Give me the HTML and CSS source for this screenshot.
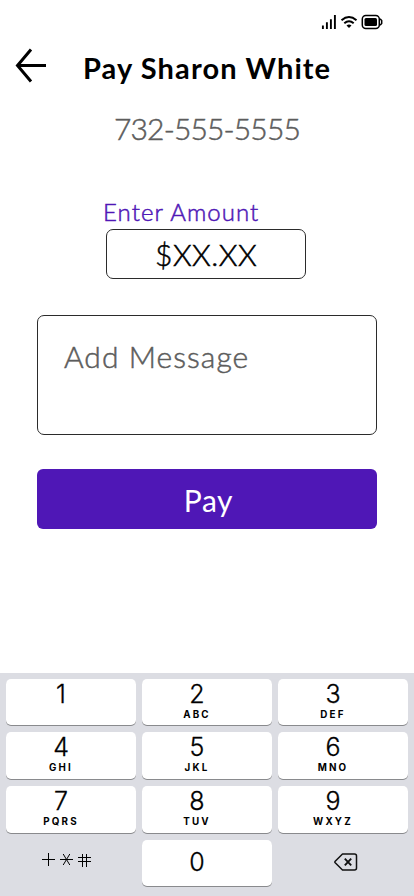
FILE: index.html
```html
<!DOCTYPE html>
<html lang="en">
<head>
<meta charset="utf-8">
<title>Pay Sharon White</title>
<link rel="stylesheet" href="styles.css">
</head>
<body>
<div class="screen">
  <div class="status">
    <svg width="64" height="16" viewBox="0 0 64 16" fill="none" stroke="#000">
      <path d="M2.900 15v-3.600M6.900 15V8.300M10.900 15V5.200M14.900 15V1" stroke-width="1.900"/>
      <path d="M21.500 6.200Q29 -.2 36.500 6.200M24.300 9.300Q29 5.200 33.700 9.300" stroke-width="2"/>
      <path d="M26.500 11.500Q29 9.700 31.500 11.500L29 14z" fill="#000" stroke="none"/>
      <rect x="42.300" y="1.500" width="17" height="13" rx="3.500" stroke-width="1.500"/>
      <rect x="44.500" y="4" width="12.500" height="8" rx="1.500" fill="#000" stroke="none"/>
      <path d="M59.500 5.200h1l1.200 1.300v3l-1.200 1.300h-1" stroke-width="1.500"/>
    </svg>
  </div>
  <header class="header">
    <svg class="back" width="32" height="36" viewBox="0 0 32 36" fill="none" stroke="#000" stroke-width="3">
      <path d="M31 17.500H3M16 1.500L2.500 17.500L16 33.500"/>
    </svg>
    <h1 class="title">Pay Sharon White</h1>
  </header>
  <div class="phone">732-555-5555</div>
  <label class="label">Enter Amount</label>
  <div class="amount"><span>$XX.XX</span></div>
  <div class="message"><span>Add Message</span></div>
  <button class="pay"><span>Pay</span></button>
  <div class="keypad">
    <div class="key"><b>1</b></div>
    <div class="key"><b>2</b><i>ABC</i></div>
    <div class="key"><b>3</b><i>DEF</i></div>
    <div class="key"><b>4</b><i>GHI</i></div>
    <div class="key"><b>5</b><i>JKL</i></div>
    <div class="key"><b>6</b><i>MNO</i></div>
    <div class="key"><b>7</b><i>PQRS</i></div>
    <div class="key"><b>8</b><i>TUV</i></div>
    <div class="key"><b>9</b><i>WXYZ</i></div>
    <div class="tool symbols">
      <svg width="50" height="14" viewBox="0 0 50 14" fill="none" stroke="#000" stroke-width="1">
        <path d="M0 6.500H13M6.500 0V13M18 6.500H31M21.200 1L27.800 12M27.800 1L21.200 12M36 4.500H49M36 8.500H49M40.500 1V14M44.500 1V14"/>
      </svg>
    </div>
    <div class="key zero"><b>0</b></div>
    <div class="tool erase">
      <svg width="24" height="18" viewBox="0 0 24 18" fill="none" stroke="#111" stroke-width="1.500">
        <path d="M8.500 1H20.500Q22.500 1 22.500 3V15Q22.500 17 20.500 17H8.500L1.200 9.800Q.5 9 1.200 8.200Z" stroke-linejoin="round"/>
        <path d="M10.800 5.700L17.200 12.300M17.200 5.700L10.800 12.300" stroke-width="1.900"/>
      </svg>
    </div>
  </div>
</div>
</body>
</html>
```
FILE: styles.css
```css
* { box-sizing: border-box; }
body { margin: 0; background: #fff; }
.screen {
  width: 414px;
  height: 896px;
  display: flex;
  flex-direction: column;
  overflow: hidden;
  font-family: Lato, "Liberation Sans", sans-serif;
  font-size: 30px;
  line-height: 36px;
  color: #000;
}
.status { height: 46px; padding: 14px 0 0 320px; }
.status svg { display: block; }
.header { display: flex; height: 60px; padding-left: 15px; }
.back { margin-top: 2px; }
.title {
  margin: 4px 0 0 36px;
  font-size: 29px;
  font-weight: 700;
  line-height: 36px;
  letter-spacing: 1.1px;
  white-space: nowrap;
}
.phone, .label, .amount, .message {
  font-weight: 300;
  -webkit-text-stroke: 0.5px currentColor;
}
.phone { height: 94px; padding: 4px 0 0 114px; color: #5c5c5c; letter-spacing: -0.85px; }
.label {
  height: 29px;
  padding-left: 103px;
  font-size: 24px;
  line-height: 24px;
  letter-spacing: 1.05px;
  color: #4f17b6;
}
.amount {
  width: 200px;
  height: 50px;
  margin-left: 106px;
  padding: 6px 0 0 48px;
  border: 1px solid #2b2b2b;
  border-radius: 7px;
  letter-spacing: 0.5px;
}
.message {
  width: 340px;
  height: 120px;
  margin: 36px 0 34px 37px;
  padding: 22px 0 0 26px;
  border: 1px solid #2b2b2b;
  border-radius: 7px;
  color: #5c5c5c;
  letter-spacing: 1.05px;
}
.pay {
  width: 340px;
  height: 60px;
  margin-left: 37px;
  padding: 2px 0 0 3px;
  border: 0;
  border-radius: 6px;
  background: #4f17b6;
  color: #fff;
  font: 400 30px/36px Lato, sans-serif;
  letter-spacing: 0.6px;
}
.keypad {
  margin-top: auto;
  height: 223px;
  padding: 6px;
  background: #dcdde3;
  display: grid;
  grid-template-columns: repeat(3, 130px);
  grid-template-rows: 46px 47px 47px 46px;
  gap: 7px 6px;
  font-family: Inter, sans-serif;
}
.key {
  display: flex;
  flex-direction: column;
  align-items: center;
  padding-right: 20px;
  border-radius: 5px;
  background: #fff;
  box-shadow: 0 1px 0 #898a8d;
}
.key b {
  margin-top: 1px;
  font-size: 25px;
  line-height: 28px;
  font-weight: 300;
  -webkit-text-stroke: 0.3px currentColor;
}
.key i {
  margin-top: 2px;
  font-size: 9.8px;
  line-height: 10px;
  font-style: normal;
  font-weight: 700;
  letter-spacing: 2.2px;
}
.zero b { margin-top: 8px; }
.symbols { padding: 13px 0 0 36px; }
.erase { padding: 13px 0 0 56px; }
.tool svg { display: block; }
```
